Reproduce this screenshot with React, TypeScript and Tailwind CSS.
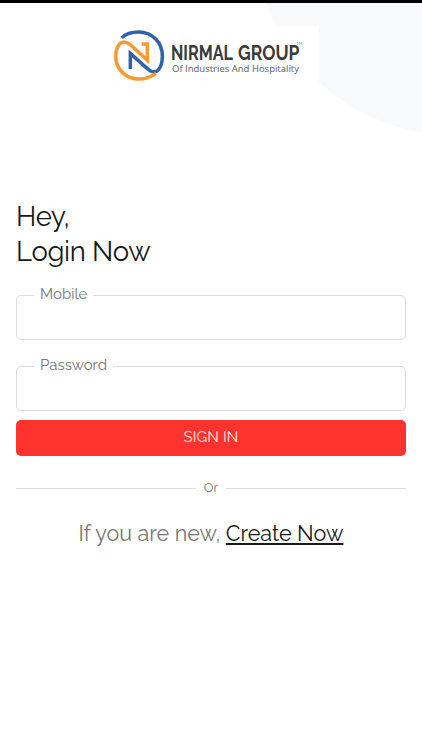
import React from "react";

function Logo() {
  return (
    <svg width="216" height="60" viewBox="103 26 216 60" className="block bg-white" role="img" aria-label="Nirmal Group">
      <g transform="translate(105 20) scale(.33333)" fill="none" strokeWidth="10.5">
        <path d="M50 53C66 38 86 36 101 36C143 36 172 68 172 108C172 146 156 158 142 155C136 154 131 150 126 145L76 100V147" stroke="#2f62a8" />
        <path d="M110 72H127V121L77 75C66 65 59 64 51 67C40 71 32 91 32 108C32 149 64 177 101 177C122 177 139 171 153 160" stroke="#f79a32" />
      </g>
      <g fontSize="19.7" fontWeight="700" fill="#3b3b3b" fontFamily="Raleway, Lato, sans-serif">
        <text x="171" y="60" textLength="62" lengthAdjust="spacingAndGlyphs">NIRMAL</text>
        <text x="238" y="60" textLength="61.5" lengthAdjust="spacingAndGlyphs">GROUP</text>
      </g>
      <text x="172" y="71.5" textLength="127" lengthAdjust="spacingAndGlyphs" fontSize="9" fill="#5c5c5c" fontFamily="'Open Sans', 'Noto Sans', sans-serif">Of Industries And Hospitality</text>
      <text x="296.5" y="45" textLength="6" lengthAdjust="spacingAndGlyphs" fontSize="4.5" fill="#777" fontFamily="Lato, sans-serif">TM</text>
    </svg>
  );
}

function Field({ label, type }: { label: string; type: string }) {
  return (
    <fieldset className="h-[52px] rounded-[5px] border border-[#dcdcde] pl-[17px]">
      <legend className="h-[14px] px-[6px] text-[15px] leading-[12px] text-[#777]">{label}</legend>
      <input aria-label={label} type={type} className="block h-[36px] w-[350px] bg-transparent outline-none" />
    </fieldset>
  );
}

export default function App() {
  return (
    <div className="relative h-[750px] w-full overflow-hidden border-t-[3px] border-black bg-white font-['Raleway','Lato',sans-serif]">
      <div className="absolute -top-[270px] left-[254px] h-[402px] w-[402px] rounded-full bg-[#f7f9fb]" />
      <header className="relative flex justify-center pt-[23px]">
        <Logo />
      </header>
      <main className="relative px-4 pt-[113px]">
        <h1 className="text-[27.5px] leading-[35px] tracking-[-0.35px] text-[#181818]">
          <span className="block">Hey,</span>
          <span className="block">Login Now</span>
        </h1>
        <form className="pt-[19px]" onSubmit={(e) => e.preventDefault()}>
          <Field label="Mobile" type="tel" />
          <div className="h-[19px]" />
          <Field label="Password" type="password" />
          <button className="mt-[9px] block h-9 w-full rounded-[5px] bg-[#ff332d] pb-px text-[15px] tracking-[0.1px] text-[#ffe9e8]">SIGN IN</button>
        </form>
        <div className="mt-[23px] flex h-[18px] items-center gap-2 text-[13px] text-[#777]">
          <span className="h-px flex-1 bg-[#dedede]" />
          <span>Or</span>
          <span className="h-px flex-1 bg-[#dedede]" />
        </div>
        <p className="mt-[21px] text-center text-[21.5px] leading-[32px] text-[#777]">
          If you are new, <a href="#" className="text-[#181818] underline decoration-[1.5px] underline-offset-[2px]">Create Now</a>
        </p>
      </main>
    </div>
  );
}
